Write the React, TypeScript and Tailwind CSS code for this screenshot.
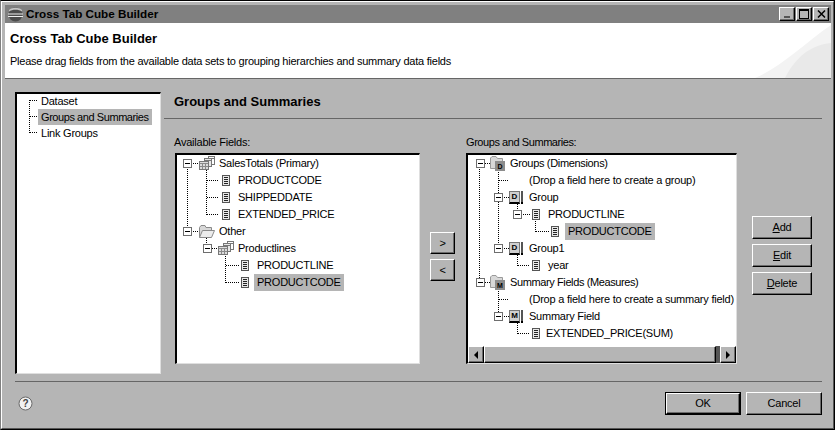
const ui = '[font-family:"Liberation_Sans",Arial,sans-serif]';

const raised =
  "border border-t-white border-l-white border-r-black border-b-black shadow-[inset_-1px_-1px_0_#6b6b6b]";

function Btn({ children, className }: { children: React.ReactNode; className: string }) {
  return (
    <div className={`flex items-center justify-center bg-[#b5b5b5] text-black ${raised} ${className}`}>
      {children}
    </div>
  );
}

function Expander() {
  return (
    <div className="flex h-[9px] w-[9px] items-center justify-center border border-[#6e6e6e] bg-white">
      <div className="h-px w-[5px] bg-black" />
    </div>
  );
}

function DocIcon() {
  return (
    <svg width="8" height="11" viewBox="0 0 8 11" shapeRendering="crispEdges">
      <rect x="0.5" y="0.5" width="7" height="10" fill="#e8e8e8" stroke="#555" />
      <path d="M2 2.5h4M2 4.5h4M2 6.5h4M2 8.5h4" stroke="#222" />
    </svg>
  );
}

function TablesIcon() {
  return (
    <svg width="16" height="15" viewBox="0 0 16 15" shapeRendering="crispEdges">
      <rect x="9.5" y="0.5" width="6" height="8" fill="#fff" stroke="#777" />
      <path d="M10 2.5h5" stroke="#777" />
      <rect x="5.5" y="2.5" width="7" height="8" fill="#e8e8e8" stroke="#777" />
      <path d="M6 4.5h6" stroke="#777" />
      <rect x="0.5" y="5.5" width="9" height="8" fill="#dcdcdc" stroke="#777" />
      <path d="M1 7.5h8M1 10.5h8M3.5 8v5M6.5 8v5" stroke="#8a8a8a" />
    </svg>
  );
}

function OpenFolderIcon() {
  return (
    <svg width="16" height="13" viewBox="0 0 16 13">
      <path d="M0.5 12.5V2.5L2 0.5H6L7 2.5H12.5V5" fill="#d8d8d8" stroke="#8a8a8a" />
      <path d="M0.5 12.5L3.5 5.5H15.5L12.5 12.5Z" fill="#ececec" stroke="#8a8a8a" />
    </svg>
  );
}

function LetterFolderIcon({ letter }: { letter: string }) {
  return (
    <div className="relative h-[15px] w-[15px]">
      <svg width="15" height="15" viewBox="0 0 15 15" className="absolute left-0 top-0">
        <path d="M0.5 12.5V2L2 0.5H6L7.5 2.5H12.5V12.5Z" fill="#d8d8d8" stroke="#9a9a9a" />
      </svg>
      <div className="absolute bottom-0 right-0 flex h-[10px] w-[10px] items-center justify-center bg-[#8c8c8c] text-[7px] font-bold leading-none tracking-normal text-black">
        {letter}
      </div>
    </div>
  );
}

function LevelIcon({ letter }: { letter: string }) {
  return (
    <div className="flex items-end gap-px">
      <div className="flex h-[13px] w-[11px] items-center justify-center border border-[#777] border-b-2 border-b-black bg-[#cfcfcf] text-[8px] font-bold leading-none tracking-normal text-black">
        {letter}
      </div>
      <div className="h-[13px] w-[2px] border-b-2 border-b-black bg-[#555]" />
    </div>
  );
}

type RowData = {
  label: string;
  pad: string;
  exp?: string;
  icon?: React.ReactNode;
  iconCell?: string;
  selected?: boolean;
  text?: string;
};

function TreeRow({ row }: { row: RowData }) {
  return (
    <div className={`flex h-[17px] items-center whitespace-nowrap ${row.pad}`}>
      {row.exp && (
        <div className={row.exp}>
          <Expander />
        </div>
      )}
      {row.icon && <div className={`flex items-center ${row.iconCell}`}>{row.icon}</div>}
      <span className={`-ml-[3px] px-[3px] leading-[17px] ${row.selected ? "bg-[#b5b5b5]" : ""} ${row.text ?? ""}`}>{row.label}</span>
    </div>
  );
}

const availableRows: RowData[] = [
  { label: "SalesTotals (Primary)", pad: "pl-[6px]", exp: "w-[16px]", icon: <TablesIcon />, iconCell: "w-[20px]" },
  { label: "PRODUCTCODE", pad: "pl-[45px]", icon: <DocIcon />, iconCell: "w-[16px]" },
  { label: "SHIPPEDDATE", pad: "pl-[45px]", icon: <DocIcon />, iconCell: "w-[16px]" },
  { label: "EXTENDED_PRICE", pad: "pl-[45px]", icon: <DocIcon />, iconCell: "w-[16px]" },
  { label: "Other", pad: "pl-[6px]", exp: "w-[16px]", icon: <OpenFolderIcon />, iconCell: "w-[20px]" },
  { label: "Productlines", pad: "pl-[26px]", exp: "w-[15px]", icon: <TablesIcon />, iconCell: "w-[20px]" },
  { label: "PRODUCTLINE", pad: "pl-[64px]", icon: <DocIcon />, iconCell: "w-[16px]" },
  { label: "PRODUCTCODE", pad: "pl-[64px]", icon: <DocIcon />, iconCell: "w-[16px]", selected: true },
];

const groupRows: RowData[] = [
  { label: "Groups (Dimensions)", pad: "pl-[8px]", exp: "w-[14px]", icon: <LetterFolderIcon letter="D" />, iconCell: "w-[20px]", text: "tracking-[-0.33px]" },
  { label: "(Drop a field here to create a group)", pad: "pl-[61px]" },
  { label: "Group", pad: "pl-[26px]", exp: "w-[15px]", icon: <LevelIcon letter="D" />, iconCell: "w-[20px]" },
  { label: "PRODUCTLINE", pad: "pl-[45px]", exp: "w-[19px]", icon: <DocIcon />, iconCell: "w-[16px]" },
  { label: "PRODUCTCODE", pad: "pl-[83px]", icon: <DocIcon />, iconCell: "w-[17px]", selected: true },
  { label: "Group1", pad: "pl-[26px]", exp: "w-[15px]", icon: <LevelIcon letter="D" />, iconCell: "w-[20px]" },
  { label: "year", pad: "pl-[64px]", icon: <DocIcon />, iconCell: "w-[16px]" },
  { label: "Summary Fields (Measures)", pad: "pl-[8px]", exp: "w-[14px]", icon: <LetterFolderIcon letter="M" />, iconCell: "w-[20px]", text: "tracking-[-0.39px]" },
  { label: "(Drop a field here to create a summary field)", pad: "pl-[61px]" },
  { label: "Summary Field", pad: "pl-[26px]", exp: "w-[15px]", icon: <LevelIcon letter="M" />, iconCell: "w-[20px]" },
  { label: "EXTENDED_PRICE(SUM)", pad: "pl-[64px]", icon: <DocIcon />, iconCell: "w-[14px]" },
];

function Guides({ d }: { d: string }) {
  return (
    <svg className="absolute left-0 top-0 h-full w-full" shapeRendering="crispEdges">
      <path d={d} fill="none" stroke="#000" strokeDasharray="1 1" />
    </svg>
  );
}

function TreeBox({ className, children }: { className: string; children: React.ReactNode }) {
  return (
    <div className={`relative overflow-hidden border-2 border-b border-r border-t-black border-l-black border-b-[#dfdfdf] border-r-[#dfdfdf] bg-white text-black ${className}`}>
      {children}
    </div>
  );
}

function Scrollbar() {
  return (
    <div className="absolute bottom-0 left-0 right-0 flex h-[17px] bg-[#dcdcdc]">
      <Btn className="w-[16px]">
        <div className="h-0 w-0 border-y-[4px] border-r-[4px] border-y-transparent border-r-black" />
      </Btn>
      <Btn className="flex-1"> </Btn>
      <div className="w-[4px] bg-[#555]" />
      <Btn className="w-[16px]">
        <div className="h-0 w-0 border-y-[4px] border-l-[4px] border-y-transparent border-l-black" />
      </Btn>
    </div>
  );
}

export default function App() {
  return (
    <div className={`h-[430px] w-[835px] overflow-hidden border border-black border-l-[#808080] bg-[#b5b5b5] text-[11px] tracking-[-0.23px] text-black ${ui}`}>
      <div className="flex h-full flex-col border border-b-[#555] border-l-white border-r-[#555] border-t-white pb-px pl-[3px] pr-[2px] pt-[3px]">
        {/* title bar */}
        <div className="flex h-[18px] shrink-0 items-center bg-[#808080] pl-[3px] pr-[2px] tracking-normal">
          <svg width="15" height="15" viewBox="0 0 15 15">
            <circle cx="7.5" cy="7.5" r="7" fill="#4c4c4c" />
            <path d="M1 4.5C4 2 11 2 14 4.5V3C11 0 4 0 1 3Z" fill="#c4c4c4" />
            <path d="M0 6.5h15v1H0zM0 9h15v1H0z" fill="#eee" />
          </svg>
          <span className="ml-[3px] text-[11.7px] font-bold">Cross Tab Cube Builder</span>
          <div className="ml-auto flex gap-px">
            <Btn className="h-[14px] w-[16px] items-end bg-[#a8a8a8] pb-[2px]">
              <div className="h-[2px] w-[6px] bg-[#555]" />
            </Btn>
            <Btn className="h-[14px] w-[16px]">
              <div className="h-[10px] w-[10px] border border-t-2 border-black" />
            </Btn>
            <Btn className="h-[14px] w-[16px]">
              <svg width="9" height="8" viewBox="0 0 9 8">
                <path d="M1 0.5L8 7.5M8 0.5L1 7.5" stroke="#000" strokeWidth="1.5" />
              </svg>
            </Btn>
          </div>
        </div>

        {/* wizard header */}
        <div className="relative h-[56px] shrink-0 border-b border-b-[#666] bg-white pl-[5px]">
          <svg className="absolute bottom-0 right-0" width="76" height="55" viewBox="0 0 76 55">
            <path d="M0 55C25 45 50 20 76 2V55Z" fill="#f3f3f3" />
            <path d="M30 55C40 35 55 22 76 20V55Z" fill="#e9e9e9" />
          </svg>
          <div className="relative pt-[8px] text-[13px] font-bold leading-[16px] tracking-normal">Cross Tab Cube Builder</div>
          <div className="relative mt-[6px] leading-[16px]">
            Please drag fields from the available data sets to grouping hierarchies and summary data fields
          </div>
        </div>

        {/* body */}
        <div className="flex flex-1 pl-[10px] pr-[9px] pt-[13px]">
          <TreeBox className="h-[282px] w-[146px] shrink-0">
            <Guides d="M12.5 6V39M13 6.5H20M13 22.5H20M13 38.5H20" />
            <div className="relative -mt-px">
              {["Dataset", "Groups and Summaries", "Link Groups"].map((t, i) => (
                <div key={t} className="flex h-[16px] items-center whitespace-nowrap pl-[21px]">
                  <span className={`px-[3px] ${i === 1 ? "bg-[#b5b5b5] tracking-[-0.43px]" : ""}`}>{t}</span>
                </div>
              ))}
            </div>
          </TreeBox>

          <div className="ml-[3px] flex-1">
            <div className="h-[27px] border-b border-b-[#666] pl-[10px] pt-[2px] text-[13px] font-bold leading-[16px] tracking-normal">
              Groups and Summaries
            </div>
            <div className="flex pl-[10px] pt-[16px]">
              <div className="w-[246px]">
                <div className="mb-[3px] h-[15px] leading-[15px]">Available Fields:</div>
                <TreeBox className="ml-px h-[211px]">
                  <Guides d="M10.5 8V76M16 8.5H22M29.5 13V60M30 25.5H42M30 42.5H42M30 59.5H42M16 76.5H22M29.5 81V89M35 93.5H41M48.5 99V128M49 110.5H62M49 127.5H62" />
                  <div className="relative">
                    {availableRows.map((r, i) => (
                      <TreeRow key={i} row={r} />
                    ))}
                  </div>
                </TreeBox>
              </div>

              <div className="ml-[10px] flex w-[36px] flex-col gap-[5px] pt-[97px]">
                <Btn className="h-[22px] w-[25px]">&gt;</Btn>
                <Btn className="h-[22px] w-[25px]">&lt;</Btn>
              </div>

              <div className="w-[271px]">
                <div className="mb-[3px] h-[15px] leading-[15px] tracking-[-0.43px]">Groups and Summaries:</div>
                <TreeBox className="h-[211px]">
                  <Guides d="M11.5 8V128M17 8.5H22M17 127.5H22M30.5 13V94M31 25.5H41M36 42.5H41M36 93.5H41M49.5 47V55M55 59.5H62M67.5 64V77M68 76.5H81M49.5 98V111M50 110.5H62M30.5 132V162M31 144.5H41M36 161.5H41M49.5 166V179M50 178.5H62" />
                  <div className="relative">
                    {groupRows.map((r, i) => (
                      <TreeRow key={i} row={r} />
                    ))}
                  </div>
                  <Scrollbar />
                </TreeBox>
              </div>

              <div className="ml-[15px] flex flex-col gap-[5px] pt-[81px]">
                <Btn className="h-[23px] w-[60px]"><span><u>A</u>dd</span></Btn>
                <Btn className="h-[23px] w-[60px]"><span><u>E</u>dit</span></Btn>
                <Btn className="h-[23px] w-[60px]"><span><u>D</u>elete</span></Btn>
              </div>
            </div>
          </div>
        </div>

        {/* footer */}
        <div className="mb-[12px] ml-[10px] mr-[9px] shrink-0 border-t border-t-[#666] pt-[10px]">
          <div className="flex items-center">
            <svg className="ml-[3px]" width="15" height="15" viewBox="0 0 15 15">
              <circle cx="7.5" cy="7.5" r="6.5" fill="#f2f2f2" stroke="#6a6a6a" />
              <text x="7.5" y="11" textAnchor="middle" fontSize="10" fontWeight="bold" fontFamily="Liberation Sans" fill="#444">?</text>
            </svg>
            <div className="ml-auto flex gap-[5px]">
              <div className="border border-black">
                <Btn className="h-[21px] w-[74px]">OK</Btn>
              </div>
              <Btn className="h-[23px] w-[76px]">Cancel</Btn>
            </div>
          </div>
        </div>
      </div>
    </div>
  );
}
